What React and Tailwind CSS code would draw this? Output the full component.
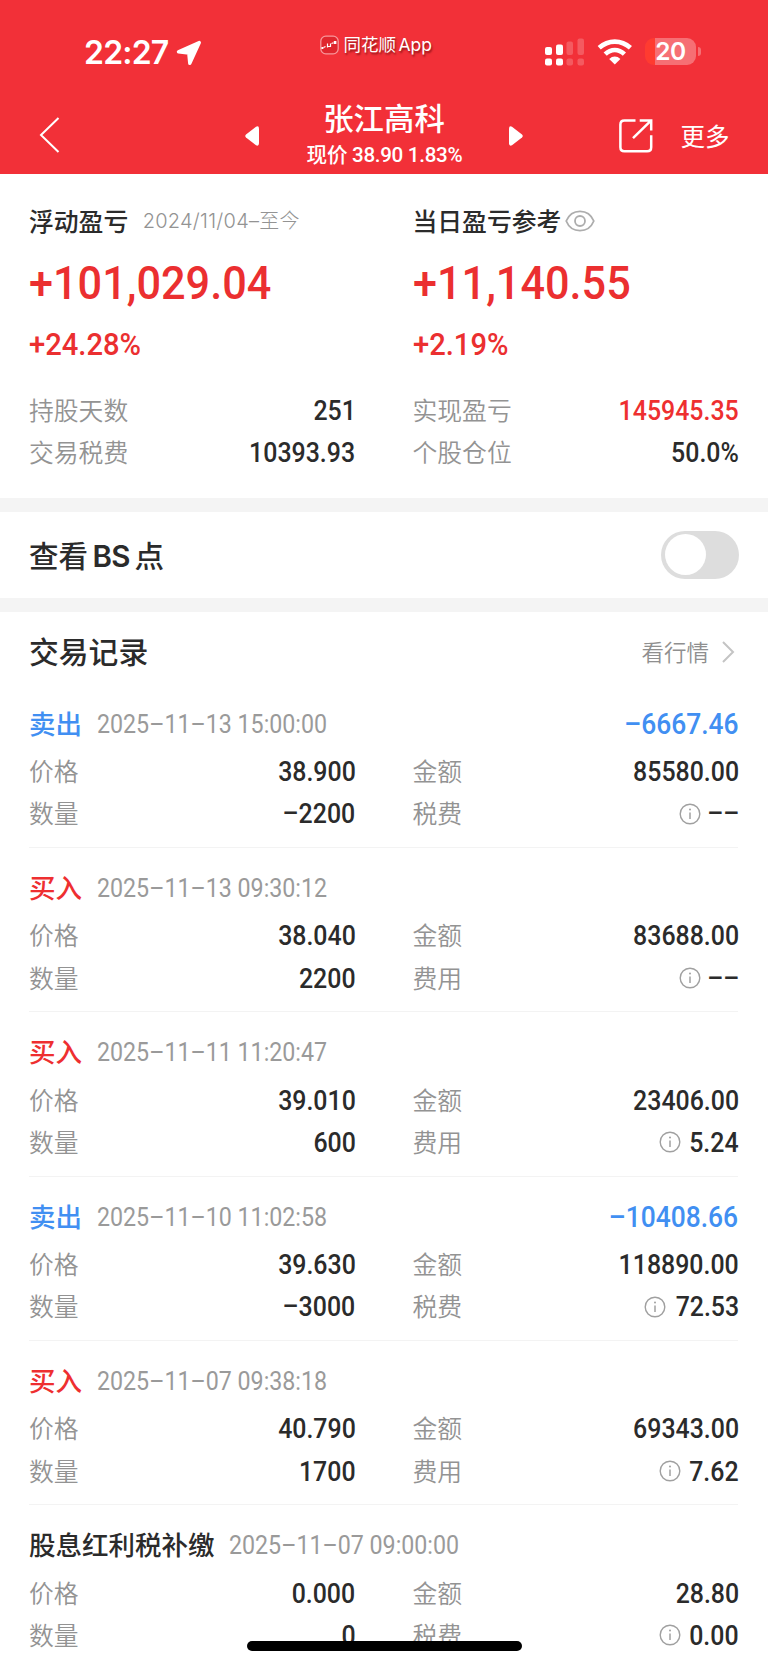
const NUM = "font-['Roboto','Noto_Sans_CJK_SC',sans-serif]";

const entries = [
  { kind: "卖出", time: "2025–11–13 15:00:00", profit: "–6667.46", price: "38.900", amount: "85580.00", qty: "–2200", feeLabel: "税费", fee: "––" },
  { kind: "买入", time: "2025–11–13 09:30:12", price: "38.040", amount: "83688.00", qty: "2200", feeLabel: "费用", fee: "––" },
  { kind: "买入", time: "2025–11–11 11:20:47", price: "39.010", amount: "23406.00", qty: "600", feeLabel: "费用", fee: "5.24" },
  { kind: "卖出", time: "2025–11–10 11:02:58", profit: "–10408.66", price: "39.630", amount: "118890.00", qty: "–3000", feeLabel: "税费", fee: "72.53" },
  { kind: "买入", time: "2025–11–07 09:38:18", price: "40.790", amount: "69343.00", qty: "1700", feeLabel: "费用", fee: "7.62" },
  { kind: "股息红利税补缴", time: "2025–11–07 09:00:00", price: "0.000", amount: "28.80", qty: "0", feeLabel: "税费", fee: "0.00" },
];

const kindColor = {
  卖出: "text-[#418ff2]",
  买入: "text-[#ee2f30]",
};

function InfoIcon() {
  return (
    <svg width="22" height="22" viewBox="0 0 22 22" fill="none" className="mr-[9px]">
      <circle cx="11" cy="11" r="9.8" stroke="#a0a0a0" strokeWidth="1.4" />
      <path d="M11 9.4v6.600" stroke="#a0a0a0" strokeWidth="1.5" />
      <circle cx="11" cy="6.6" r="1" fill="#a0a0a0" />
    </svg>
  );
}

// The figures are condensed to 90% of their width, so the icon moves in by what they give up.
function Field({ label, value, info, color = "text-[#2b2b2b]" }) {
  const inset = value === "––" ? 6 : 1.3 * value.length;
  return (
    <div className="flex h-[42.3px] items-center justify-between">
      <span className="pb-[1.500px] text-[24.8px] leading-none font-[350] text-[#939393]">{label}</span>
      <span className="-mr-[1px] flex items-center">
        {info && <InfoIcon />}
        <span
          className={`${NUM} inline-block origin-right scale-x-[0.905] pt-[1px] text-[27.5px] leading-none font-medium ${color}`}
          style={{ marginLeft: -inset }}
        >
          {value}
        </span>
      </span>
    </div>
  );
}

function StatusBar() {
  return (
    <div className="flex h-[92px] items-start text-white">
      <div className="flex w-[320px] items-center pt-[37px] pl-[84px]">
        <span className="font-['Inter',sans-serif] text-[32px] leading-8 font-semibold tracking-[-0.8px]">22:27</span>
        <svg width="26" height="26" viewBox="0 0 26 26" className="mb-[1px] ml-[8px]">
          <path d="M23.300 2.500 2.500 11.800 12.800 13 13.800 23.300z" fill="#fff" stroke="#fff" strokeWidth="3.400" strokeLinejoin="round" />
        </svg>
      </div>
      <div className="flex w-[225px] items-center pt-[33px]">
        <svg width="19" height="20" viewBox="0 0 19 20" fill="none" className="mr-[4.500px]">
          <rect x=".8" y="1.200" width="17.400" height="17.600" rx="5" fill="#e0262e" stroke="#f7969a" strokeWidth="1.300" />
          <path d="M3.500 12.500 5.500 11.500M7.500 8.500v4M8 11.500h2.500v-3M11.500 8.500l2-.8" stroke="#fff" strokeWidth="1.200" />
          <path d="M1.400 12h2v2h-2zM13.800 6h2.600v3h-2.600z" fill="#fff" />
        </svg>
        <span className="font-['Inter','Noto_Sans_CJK_SC',sans-serif] text-[17.500px] leading-6 [word-spacing:-2.500px] [text-shadow:1px_1.500px_2px_rgba(80,0,0,0.6)]">同花顺 App</span>
      </div>
      <div className="flex pt-[37.500px]">
        <svg width="40" height="28" viewBox="0 0 40 28" fill="#fff">
          <rect x="0" y="9" width="7" height="8" rx="2" />
          <rect x="0" y="20.500" width="7" height="7" rx="2" />
          <rect x="11" y="6.500" width="7" height="10.500" rx="2" />
          <rect x="11" y="20.500" width="7" height="7" rx="2" />
          <g opacity=".2">
            <rect x="21.500" y="3.500" width="6.500" height="13.500" rx="2" />
            <rect x="21.500" y="20.500" width="6.500" height="7" rx="2" />
            <rect x="32.500" y="0.500" width="6.500" height="16.500" rx="2" />
            <rect x="32.500" y="20.500" width="6.500" height="7" rx="2" />
          </g>
        </svg>
        <svg width="36" height="28" viewBox="0 0 36 28" className="ml-[12px]" fill="none" stroke="#fff" strokeWidth="4.600">
          <path d="M2.200 9.800Q9 3.600 17.800 3.600T33.400 9.800" />
          <path d="M8.200 16.200Q12.500 12 17.800 12T27.400 16.200" />
          <path d="M17.800 26.500 12.200 21Q14.800 18.600 17.800 18.600T23.400 21z" fill="#fff" stroke="none" />
        </svg>
        <div className="ml-[12px] flex h-[27px] w-[51px] items-center justify-center rounded-[9px] bg-linear-to-r from-[#ff3b30] from-20% to-[#f66f74] to-20%">
          <span className="font-['Inter',sans-serif] text-[24.500px] leading-none font-semibold tracking-[-0.500px]">20</span>
        </div>
        <div className="mt-[9px] ml-[2px] h-[9px] w-[3px] rounded-r-full bg-[#f66f74]" />
      </div>
    </div>
  );
}

function NavBar() {
  return (
    <div className="flex h-[82px] items-start text-white">
      <svg width="62" height="36" viewBox="0 0 62 36" fill="none" className="mt-[25px]">
        <path d="M58.500 1 41 18 58.500 35" stroke="#fff" strokeWidth="2" />
      </svg>
      <svg width="15" height="20" viewBox="0 0 15 20" className="mt-[33.500px] ml-[183px]">
        <path d="M1 8.500 11 .7q3-1.200 3 2v14.600q0 3.200-3 2L1 11.500q-1.500-1.500 0-3z" fill="#fff" />
      </svg>
      <div className="flex w-[248px] flex-col items-center">
        <div className="pt-[9px] text-[30.400px] leading-[32px] font-medium">张江高科</div>
        <div className={`${NUM} scale-x-[0.98] pt-[10px] text-[21px] leading-[24px] font-medium tracking-[-0.300px] whitespace-nowrap`}>现价 38.90 1.83%</div>
      </div>
      <svg width="15" height="20" viewBox="0 0 15 20" className="mt-[33.500px]">
        <path d="M14 8.500 4 .7Q1 -.5 1 2.700v14.600q0 3.200 3 2L14 11.500q1.500-1.500 0-3z" fill="#fff" />
      </svg>
      <svg width="34" height="34" viewBox="0 0 34 34" fill="none" className="mt-[26.500px] ml-[96px]" stroke="#fff" strokeWidth="2.500">
        <path d="M16.500 1.400H5.400q-4 0-4 4V28.200q0 4 4 4H28.200q4 0 4-4V16.300" />
        <path d="M20.700 1.400h11.500V11.400M32.200 1.400 14 19.200" />
      </svg>
      <div className="mt-[31.500px] ml-[27.500px] text-[24.500px] leading-[24px]">更多</div>
    </div>
  );
}

function Entry({ entry }) {
  return (
    <div className="h-[164.350px] border-b border-[#f3f3f3] pt-[14.300px]">
      <div className="flex h-[52.300px] items-center">
        <span className={`pb-[2px] text-[26.500px] leading-none font-medium ${kindColor[entry.kind] ?? "text-[#2b2b2b]"}`}>{entry.kind}</span>
        <span className={`${NUM} ml-[14.500px] inline-block origin-left scale-x-[0.91] pt-[1px] text-[25.500px] leading-none text-[#9a9a9a]`}>{entry.time}</span>
        <span className={`${NUM} -mr-[0.500px] ml-auto inline-block origin-right scale-x-[0.91] pt-[2px] text-[29px] leading-none font-medium text-[#418ff2]`}>{entry.profit}</span>
      </div>
      <div className="grid grid-cols-2 gap-x-[58px]">
        <Field label="价格" value={entry.price} />
        <Field label="金额" value={entry.amount} />
        <Field label="数量" value={entry.qty} />
        <Field label={entry.feeLabel} value={entry.fee} info />
      </div>
    </div>
  );
}

function Gain({ amount, percent }) {
  return (
    <div className={`${NUM} font-medium text-[#eb2f30]`}>
      <div className="mt-[21.500px] origin-left scale-x-[0.93] text-[46.500px] leading-[50px]">{amount}</div>
      <div className="mt-[21px] origin-left scale-x-[0.94] text-[31px] leading-[32px]">{percent}</div>
    </div>
  );
}

export default function App() {
  return (
    <div className="relative h-[1665px] w-[768px] overflow-hidden bg-white font-['Noto_Sans_CJK_SC',sans-serif] text-[#2b2b2b]">
      <header className="h-[174.300px] bg-[#f23038]">
        <StatusBar />
        <NavBar />
      </header>

      <section className="grid h-[323.700px] grid-cols-2 gap-x-[58px] pr-[30px] pl-[29px]">
        <div className="pt-[32px]">
          <div className="flex h-[30px] items-center">
            <span className="pb-[2px] text-[24.800px] leading-none font-medium">浮动盈亏</span>
            <span className="ml-[14.500px] font-['Inter','Noto_Sans_CJK_SC',sans-serif] text-[20px] leading-none font-light tracking-[0.250px] text-[#939393]">2024/11/04–至今</span>
          </div>
          <Gain amount="+101,029.04" percent="+24.28%" />
          <div className="mt-[28px]">
            <Field label="持股天数" value="251" />
            <Field label="交易税费" value="10393.93" />
          </div>
        </div>
        <div className="pt-[32px]">
          <div className="flex h-[30px] items-center">
            <span className="pb-[2px] text-[24.800px] leading-none font-medium">当日盈亏参考</span>
            <svg width="30" height="22" viewBox="0 0 30 22" fill="none" className="ml-[4px]" stroke="#adadad" strokeWidth="1.800">
              <path d="M1.200 11C4 4.200 9 1.300 15 1.300S26 4.200 28.800 11C26 17.800 21 20.700 15 20.700S4 17.800 1.200 11z" />
              <circle cx="15" cy="11" r="5" />
            </svg>
          </div>
          <Gain amount="+11,140.55" percent="+2.19%" />
          <div className="mt-[28px]">
            <Field label="实现盈亏" value="145945.35" color="text-[#ee2f30]" />
            <Field label="个股仓位" value="50.0%" />
          </div>
        </div>
      </section>

      <section className="flex h-[114px] items-center justify-between border-y-[14px] border-[#f4f4f4] pr-[29px] pl-[29px]">
        <span className="pt-[3px] font-['Inter','Noto_Sans_CJK_SC',sans-serif] text-[29.500px] leading-none font-medium [word-spacing:-3.500px]">
          查看 <span className="font-semibold tracking-[-0.500px]">BS</span> 点
        </span>
        <span className="flex h-[48px] w-[78px] items-center rounded-full bg-[#dddddd] px-[3.500px]">
          <span className="size-[41px] rounded-full bg-white" />
        </span>
      </section>

      <section className="pr-[30px] pl-[29px]">
        <div className="flex h-[71.500px] items-center justify-between pt-[6.500px]">
          <span className="text-[29.800px] leading-none font-medium">交易记录</span>
          <span className="flex items-center text-[22.500px] leading-none font-[350] text-[#8f8f8f]">
            看行情
            <svg width="13" height="22" viewBox="0 0 13 22" fill="none" className="mt-[2px] mr-[3px] ml-[13px]">
              <path d="M1 1 11 11 1 21" stroke="#c4c4c4" strokeWidth="2" />
            </svg>
          </span>
        </div>
        {entries.map((entry) => (
          <Entry key={entry.time} entry={entry} />
        ))}
      </section>

      <div className="absolute top-[1641px] left-[247px] h-[9.500px] w-[274.500px] rounded-full bg-black" />
    </div>
  );
}
